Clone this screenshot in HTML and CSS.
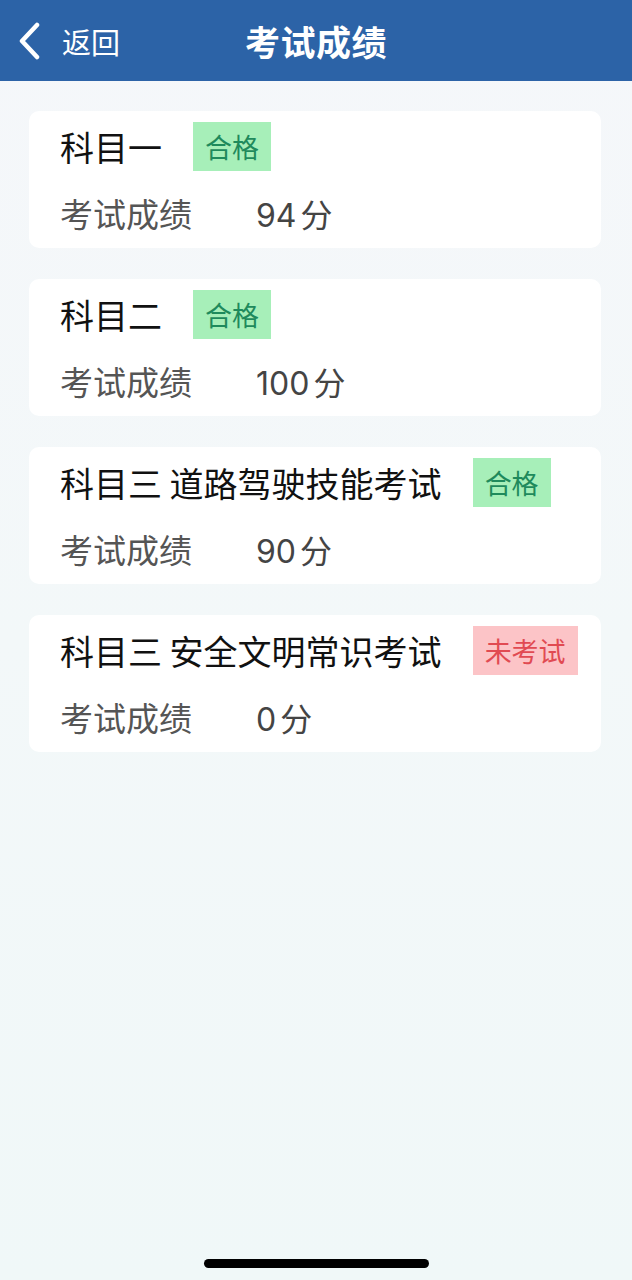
FILE: index.html
```html
<!DOCTYPE html>
<html lang="zh-CN">
<head>
  <meta charset="UTF-8">
  <meta name="viewport" content="width=device-width, initial-scale=1.0">
  <title>考试成绩</title>
  <link rel="stylesheet" href="styles.css">
</head>
<body>

<div class="page">
  <div class="top-bar">
    <a class="back-link" href="#">
      <svg class="back-icon" width="26" height="38" viewBox="0 0 26 38">
        <path d="M21 3 L6 19 L21 35" fill="none" stroke="#fff" stroke-width="4.5" stroke-linecap="round" stroke-linejoin="round"/>
      </svg>
      <span>返回</span>
    </a>
    <h1>考试成绩</h1>
    <div></div>
  </div>

  <div class="score-list">
    <div class="score-card">
      <div class="card-head">
        <span class="subject">科目一</span>
        <span class="tag tag-pass">合格</span>
      </div>
      <div class="card-score">
        <span class="score-label">考试成绩</span>
        <span class="score-value">94<span class="unit">分</span></span>
      </div>
    </div>

    <div class="score-card">
      <div class="card-head">
        <span class="subject">科目二</span>
        <span class="tag tag-pass">合格</span>
      </div>
      <div class="card-score">
        <span class="score-label">考试成绩</span>
        <span class="score-value">100<span class="unit">分</span></span>
      </div>
    </div>

    <div class="score-card">
      <div class="card-head">
        <span class="subject">科目三 道路驾驶技能考试</span>
        <span class="tag tag-pass">合格</span>
      </div>
      <div class="card-score">
        <span class="score-label">考试成绩</span>
        <span class="score-value">90<span class="unit">分</span></span>
      </div>
    </div>

    <div class="score-card">
      <div class="card-head">
        <span class="subject">科目三 安全文明常识考试</span>
        <span class="tag tag-none">未考试</span>
      </div>
      <div class="card-score">
        <span class="score-label">考试成绩</span>
        <span class="score-value">0<span class="unit">分</span></span>
      </div>
    </div>
  </div>

  <div class="home-bar"></div>
</div>

</body>
</html>
```

FILE: styles.css
```css
body {
    font-family: "Noto Sans CJK SC", "Noto Sans", sans-serif;
    margin: 0;
    color: #111;
}
.page {
    display: flex;
    flex-direction: column;
    min-height: 1280px;
    background: linear-gradient(to bottom, #f5f7fa 0%, #f3f8f9 50%, #f0f8f8 100%);
    box-sizing: border-box;
}
.top-bar {
    display: grid;
    grid-template-columns: 1fr auto 1fr;
    align-items: center;
    height: 81px;
    background-color: #2c63a7;
    color: #fff;
}
.back-link {
    display: flex;
    align-items: center;
    padding-left: 16px;
    color: #fff;
    text-decoration: none;
    font-size: 29px;
}
.back-icon {
    margin-right: 20px;
    margin-top: 1px;
}
.top-bar h1 {
    margin: 0;
    font-size: 35px;
    font-weight: 700;
    letter-spacing: 0.5px;
}
.score-list {
    display: flex;
    flex-direction: column;
    gap: 31px;
    padding: 30px 31px 0 29px;
}
.score-card {
    background: #fff;
    border-radius: 10px;
    padding: 11px 31px 13px;
}
.card-head {
    display: flex;
    align-items: center;
    height: 49px;
    white-space: nowrap;
}
.subject {
    flex-shrink: 0;
    font-size: 34px;
    line-height: 49px;
    color: #111;
}
.tag {
    flex-shrink: 0;
    margin-left: 31px;
    padding: 0 12px;
    height: 49px;
    line-height: 49px;
    font-size: 27px;
}
.tag-pass {
    background-color: #a7efb9;
    color: #1f8a5c;
}
.tag-none {
    background-color: #fcc4c7;
    color: #e14a52;
}
.card-score {
    display: flex;
    align-items: center;
    margin-top: 20px;
    height: 44px;
    font-size: 33px;
}
.score-label {
    color: #555;
    width: 132px;
    margin-right: 64px;
}
.score-value {
    font-family: Inter, "Noto Sans CJK SC", sans-serif;
    font-size: 32px;
    color: #444;
}
.unit {
    margin-left: 4px;
}
.home-bar {
    align-self: center;
    width: 225px;
    height: 9px;
    margin: auto 0 12px;
    border-radius: 5px;
    background: #000;
}
```
